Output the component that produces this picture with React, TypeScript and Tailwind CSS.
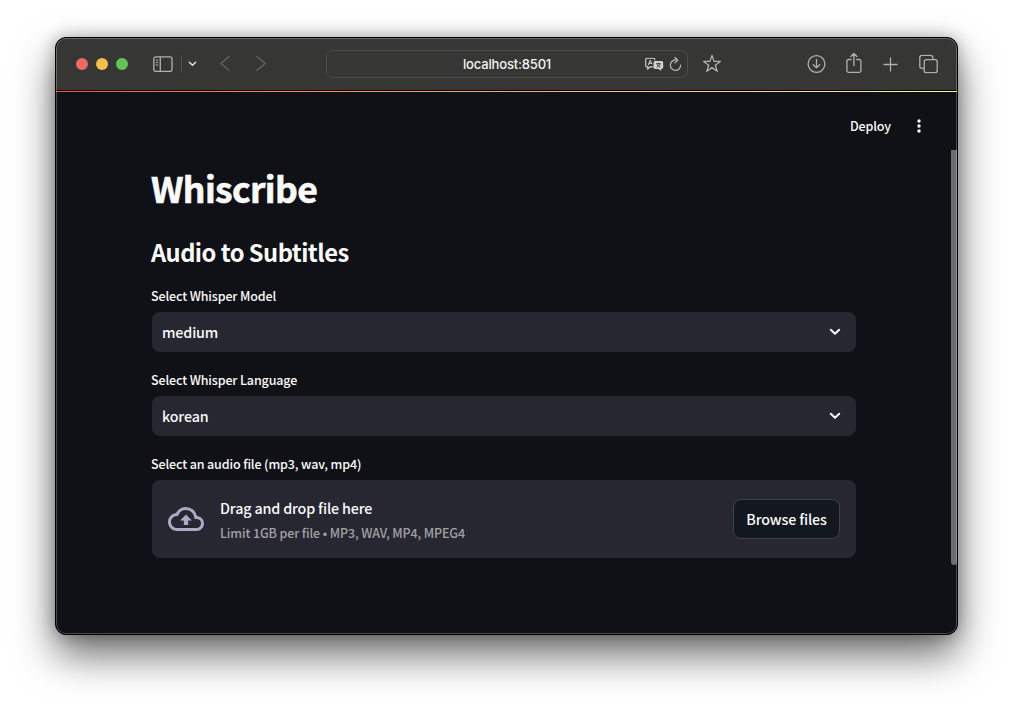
import React from "react";

const body = "font-['Noto_Sans_CJK_KR','Noto_Sans_CJK_JP',sans-serif]";
const small = "whitespace-nowrap text-[12.5px] font-medium tracking-[-0.13px]";
const normal = "whitespace-nowrap text-[14.3px] font-medium tracking-[-0.15px]";

function Chevron({ className }: { className: string }) {
  return (
    <svg className={className} viewBox="0 0 12 8" fill="none" stroke="currentColor" strokeWidth="2" strokeLinecap="round" strokeLinejoin="round">
      <path d="M1.8 1.7 6 5.7 10.2 1.7" />
    </svg>
  );
}

function Toolbar() {
  return (
    <header className="flex h-[52px] shrink-0 items-center bg-[#363634] pl-[20px] pr-[19px] text-[#b0b0ae]">
      <div className="flex gap-2">
        <span className="size-3 rounded-full bg-[#ed6a5e]" />
        <span className="size-3 rounded-full bg-[#f5bf4f]" />
        <span className="size-3 rounded-full bg-[#61c554]" />
      </div>
      <svg className="ml-[25px] h-4 w-5" viewBox="0 0 20 16" fill="none" stroke="currentColor" strokeWidth="1.3">
        <rect x="0.8" y="0.8" width="18.2" height="14.6" rx="2" />
        <path d="M7.3 1v14" />
        <path d="M2.7 4.2h2.6M2.7 6.6h2.6M2.7 9h2.6" strokeWidth="1" />
      </svg>
      <span className="ml-[8px] h-[18px] w-px bg-[#4b4b49]" />
      <Chevron className="ml-[6px] h-[6px] w-[9px] text-[#e2e2e0]" />
      <svg className="ml-[23px] h-[16px] w-[10px] -translate-y-[0.5px] text-[#62625f]" viewBox="0 0 10 16" fill="none" stroke="currentColor" strokeWidth="1.5" strokeLinecap="round" strokeLinejoin="round">
        <path d="M9 1 1 8l8 7" />
      </svg>
      <svg className="ml-[26px] h-[16px] w-[10px] -translate-y-[0.5px] text-[#62625f]" viewBox="0 0 10 16" fill="none" stroke="currentColor" strokeWidth="1.5" strokeLinecap="round" strokeLinejoin="round">
        <path d="m1 1 8 7-8 7" />
      </svg>
      <div className="ml-[60px] flex h-7 w-[362px] items-center rounded-[7px] border border-[#4c4c4a] pl-[136px] pr-[5px]">
        <span className="whitespace-nowrap font-[Inter,sans-serif] text-[13px] font-medium leading-4 tracking-[-0.17px] text-[#f4f4f2]">
          localhost:8501
        </span>
        <svg className="ml-auto h-[14px] w-[19px] translate-y-[0.5px] text-[#d4d4d2]" viewBox="0 0 19 14" fill="none">
          <path d="M8.2 9.4H5L2.8 11.5V9.4H2.3A1.5 1.5 0 0 1 .7 7.9V2.3A1.5 1.5 0 0 1 2.2.8h6.2a1.5 1.5 0 0 1 1.5 1.5v.5" stroke="currentColor" strokeWidth="1.1" />
          <path d="m3.2 7.6 2.1-5.1 1.6 4.1M4 5.8h2.6" stroke="currentColor" strokeWidth="1" />
          <path d="M10.2 3.5h6.3A1.7 1.7 0 0 1 18.2 5.2v4.6a1.7 1.7 0 0 1-1.7 1.7h-.4v2l-2.3-2h-3.6a1.7 1.7 0 0 1-1.7-1.7V5.2a1.7 1.7 0 0 1 1.7-1.7Z" fill="currentColor" />
          <path d="M11 6.2h5M13.5 5v1.2M12.1 6.5c.5 1.6 1.6 2.7 3.5 3.3M15 6.5c-.5 1.6-1.6 2.7-3.5 3.3" stroke="#363634" strokeWidth=".9" />
        </svg>
        <svg className="ml-[6px] h-[15px] w-[12px] -translate-x-[0.5px] -translate-y-[0.5px]" viewBox="0 0 12 15" fill="none" stroke="#b6b6b4" strokeWidth="1.3" strokeLinecap="round" strokeLinejoin="round">
          <path d="M7.2 3.6A5.2 5.2 0 1 0 11.2 8.6" />
          <path d="M5.4 1 8.2 3.7 5.4 6.4" />
        </svg>
      </div>
      <svg className="ml-[14.5px] h-[18px] w-[18px] -translate-y-[0.5px]" viewBox="0 0 18 18" fill="none" stroke="currentColor" strokeWidth="1.3" strokeLinejoin="round">
        <path d="m9 .9 2.1 6h6.2l-5 3.8 1.9 6.1L9 13.1l-5.2 3.7 1.9-6.1-5-3.8h6.2Z" />
      </svg>
      <svg className="ml-auto size-[19px] -translate-y-[0.5px]" viewBox="0 0 19 19" fill="none" stroke="currentColor" strokeWidth="1.3" strokeLinecap="round" strokeLinejoin="round">
        <circle cx="9.5" cy="9.5" r="8.4" />
        <path d="M9.5 5v8.3M6.3 10.3l3.2 3.1 3.2-3.1" />
      </svg>
      <svg className="ml-[20px] h-[21px] w-[16px] -translate-y-[1.5px]" viewBox="0 0 16 21" fill="none" stroke="currentColor" strokeWidth="1.3" strokeLinecap="round" strokeLinejoin="round">
        <path d="M5 7H2.6A1.7 1.7 0 0 0 .9 8.7v9.5a1.7 1.7 0 0 0 1.7 1.7h10.6a1.7 1.7 0 0 0 1.7-1.7V8.7A1.7 1.7 0 0 0 13.2 7H10.8M7.9 13V1.2M4.9 4l3-3 3 3" />
      </svg>
      <svg className="ml-[21px] size-[15px]" viewBox="0 0 15 15" fill="none" stroke="currentColor" strokeWidth="1.3" strokeLinecap="round">
        <path d="M7.5 1v13M1 7.5h13" />
      </svg>
      <svg className="ml-[21px] size-[19px] -translate-y-[0.5px]" viewBox="0 0 19 19" fill="none" stroke="currentColor" strokeWidth="1.3" strokeLinejoin="round">
        <rect x="5.2" y="5.2" width="13" height="13" rx="2.2" />
        <path d="M5 13.8H3A2.2 2.2 0 0 1 .8 11.6V3A2.2 2.2 0 0 1 3 .8h8.6A2.2 2.2 0 0 1 13.8 3v2" />
      </svg>
    </header>
  );
}

function Field({ label, value }: { label: string; value: string }) {
  return (
    <div className="mb-[18px]">
      <div className={`mb-1.5 h-5 leading-5 ${small}`}>{label}</div>
      <div className="ml-px flex h-10 items-center justify-between rounded-lg bg-[#262730] pl-[10px] pr-[15px]">
        <span className={`leading-5 ${normal}`}>{value}</span>
        <Chevron className="h-[8px] w-[12px] text-[#fafafa]" />
      </div>
    </div>
  );
}

export default function App() {
  return (
    <div className="h-[708px] w-[1013px] overflow-hidden bg-white pl-[55px] pt-[37px]">
      <div className="flex h-[598px] w-[903px] rounded-[11px] border border-black bg-[#101116] shadow-[0_20px_40px_rgba(0,0,0,0.58),0_0_16px_rgba(0,0,0,0.28)]">
        <div className="relative flex w-full flex-col overflow-hidden rounded-[10px]">
          <Toolbar />
          <div className="h-px shrink-0 bg-black" />
          <div className="h-px shrink-0 bg-gradient-to-r from-[#ff4b4b] to-[#fffd80]" />
          <main className={`relative flex-1 bg-[#101116] text-[#fafafa] ${body}`}>
            <div className="flex h-[68px] items-center justify-end pr-[36px]">
              <span className={`leading-5 ${small}`}>Deploy</span>
              <svg className="ml-[26px] h-[14px] w-1" viewBox="0 0 4 14" fill="currentColor">
                <circle cx="2" cy="2" r="1.7" />
                <circle cx="2" cy="7" r="1.7" />
                <circle cx="2" cy="12" r="1.7" />
              </svg>
            </div>
            <div className="ml-[95px] w-[705px]">
              <h1 className="h-[56px] whitespace-nowrap text-[35.5px] font-bold leading-[56px] tracking-[-0.65px] [-webkit-text-stroke:0.6px_#fafafa]">Whiscribe</h1>
              <h2 className="mt-[19px] h-[34px] whitespace-nowrap text-[23.7px] font-bold leading-[34px] tracking-[-0.53px]">Audio to Subtitles</h2>
              <div className="h-[17px]" />
              <Field label="Select Whisper Model" value="medium" />
              <Field label="Select Whisper Language" value="korean" />
              <div className={`mb-1.5 h-5 leading-5 ${small}`}>Select an audio file (mp3, wav, mp4)</div>
              <div className="ml-px flex h-[78px] items-center rounded-lg bg-[#262730] px-4">
                <svg className="size-9 text-[#a9acc3]" viewBox="0 0 24 24" fill="currentColor">
                  <path d="M19.35 10.04A7.49 7.49 0 0 0 12 4C9.11 4 6.6 5.64 5.35 8.04A5.994 5.994 0 0 0 0 14c0 3.31 2.69 6 6 6h13c2.76 0 5-2.24 5-5 0-2.64-2.05-4.78-4.65-4.96ZM19 18H6c-2.21 0-4-1.79-4-4 0-2.05 1.53-3.76 3.56-3.97l1.07-.11.5-.95A5.469 5.469 0 0 1 12 6c2.62 0 4.88 1.86 5.39 4.43l.3 1.5 1.53.11A2.98 2.98 0 0 1 22 15c0 1.65-1.35 3-3 3ZM8 13h2.55v3h2.9v-3H16l-4-4Z" />
                </svg>
                <div className="ml-4 flex flex-col">
                  <span className={`h-[26px] leading-[26px] ${normal}`}>Drag and drop file here</span>
                  <span className={`h-[22px] leading-[24px] text-[#a1a1a6] ${small}`}>Limit 1GB per file • MP3, WAV, MP4, MPEG4</span>
                </div>
                <button className={`ml-auto flex h-10 w-[107px] items-center justify-center rounded-lg border border-[#41434b] bg-[#131720] ${normal}`}>
                  Browse files
                </button>
              </div>
            </div>
            <div className="absolute right-0 top-[58px] h-[415px] w-[6px] rounded-b-[3px] bg-[#6b6c70]" />
          </main>
          <div className="pointer-events-none absolute inset-0 rounded-[10px] border border-white/25" />
        </div>
      </div>
    </div>
  );
}
